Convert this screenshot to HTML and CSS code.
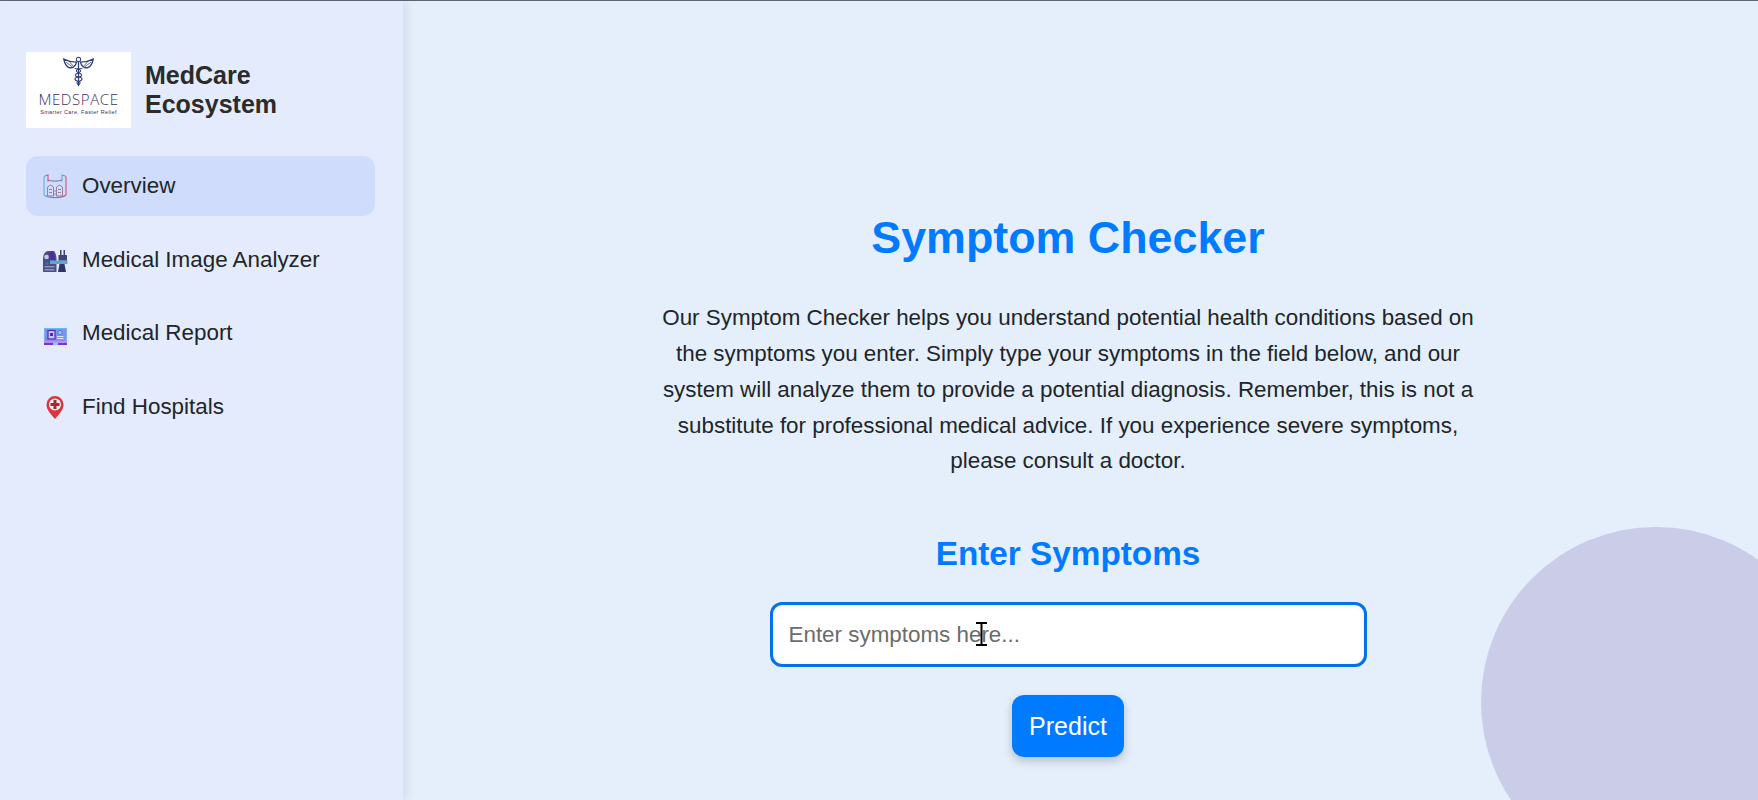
FILE: index.html
```html
<!DOCTYPE html>
<html lang="en">
  <head>
    <meta charset="utf-8">
    <meta name="viewport" content="width=device-width, initial-scale=1">
    <title>Symptom Checker - MedCare Ecosystem</title>
    <link rel="stylesheet" href="styles.css">
  </head>
  <body>
    <div class="app">
      <aside class="sidebar">
        <div class="brand">
          <div class="logo">
            <svg class="logo-mark" viewBox="0 0 40 40" aria-hidden="true">
              <g fill="none" stroke="#2c3e73">
                <circle cx="20" cy="4.500" r="2.800" stroke-width="1.300"/>
                <path d="M20 7v32" stroke-width="1.600"/>
                <path d="M1 4c5 2.500 11 4 16.500 4-1 5-5 8-9.500 7C5 14 2 9 1 4z" stroke-width="1.700"/>
                <path d="M39 4c-5 2.500-11 4-16.500 4 1 5 5 8 9.500 7 3-1 6-6 7-11z" stroke-width="1.700"/>
                <path d="M4 8l8 6M8 7l6 7M36 8l-8 6M32 7l-6 7" stroke-width="1"/>
                <path d="M15 16c8 0 10 4 5 5.500s-6 5 0 5.500 6 4 1 5.500-3 3-1 5" stroke-width="1.300"/>
                <path d="M25 16c-8 0-10 4-5 5.500s6 5 0 5.500-6 4-1 5.500 3 3 1 5" stroke-width="1.300"/>
              </g>
            </svg>
            <div class="logo-name">MEDSPACE</div>
            <div class="logo-tag">Smarter Care, Faster Relief</div>
          </div>
          <h2 class="brand-title">MedCare Ecosystem</h2>
        </div>

        <nav class="nav">
          <a class="nav-item active" href="#">
            <svg class="nav-icon" viewBox="0 0 26 26" aria-hidden="true">
              <defs>
                <linearGradient id="rimGrad" x1="0" x2="1" y1="0" y2="0">
                  <stop offset="0" stop-color="#58b4f6"/>
                  <stop offset="0.5" stop-color="#7f7fb5"/>
                  <stop offset="1" stop-color="#d8506f"/>
                </linearGradient>
              </defs>
              <g fill="none" stroke="url(#rimGrad)" stroke-width="1.100">
                <path d="M2 22V4.500c0-1 1.500-2 4-2.500v6.500"/>
                <path d="M24 22V4.500c0-1-1.500-2-4-2.500v6.500"/>
                <path d="M2 22c4 3.500 18 3.500 22 0"/>
              </g>
              <path d="M6 7c4 1.500 10 1.500 14 0" fill="none" stroke="#7a6f9c"/>
              <g fill="none" stroke="#9a7f9f" stroke-width="1">
                <path d="M5.500 23v-9l3-2 3 2v9z"/>
                <path d="M14.500 23v-9l3-2 3 2v9z"/>
                <path d="M7 16.500h3M7 19.500h3M16 16.500h3M16 19.500h3M11.500 18h3M11.500 21h3"/>
              </g>
            </svg>
            <span>Overview</span>
          </a>
          <a class="nav-item" href="#">
            <svg class="nav-icon" viewBox="0 0 26 26" aria-hidden="true">
              <path d="M1 12c0-5 2-8 6-8h5c1.500 2 2.500 5 2.500 8v13H2c-.7 0-1-.5-1-1z" fill="#4b4f80"/>
              <path d="M7 6c1-1.500 3-2 4-1 1.500 2 2 5 2 8H8z" fill="#4b2f9f"/>
              <circle cx="4.500" cy="10" r="2.300" fill="#b9cfe8"/>
              <path d="M3.500 15.500h3v2h-3z" fill="#2a7fc0"/>
              <path d="M8 13.500h17.500v3.500H8z" fill="#5aa7d8"/>
              <path d="M2.500 19h10v1.500h-10zM2.500 22h10v1.500h-10z" fill="#8f93c4"/>
              <path d="M18 3h1.500v5H18zM21.500 3H23v5h-1.500zM16.500 8H25v5.500h-8.500z" fill="#3f4475"/>
              <path d="M17.500 17h5l1.500 8h-8z" fill="#2e3468"/>
            </svg>
            <span>Medical Image Analyzer</span>
          </a>
          <a class="nav-item" href="#">
            <svg class="nav-icon" viewBox="0 0 26 26" aria-hidden="true">
              <rect x="2.500" y="8.500" width="22" height="13" fill="#8f8af0" stroke="#6fb6f2"/>
              <rect x="6" y="10.500" width="7" height="8.500" fill="#c4c5f8" stroke="#4b2fb0" stroke-width="1.200"/>
              <path d="M8 13h3v3H8z" fill="#4b2fb0"/>
              <circle cx="18" cy="12.500" r="2.200" fill="#7fd0f2" stroke="#4a7fd8"/>
              <path d="M15 16.500h6.500M15 18.500h6.500" stroke="#dfe2fa"/>
              <path d="M2 22.500h23V25H2z" fill="#7a2fe0"/>
              <path d="M11 22.500h5V25h-5z" fill="#8fc0f4"/>
            </svg>
            <span>Medical Report</span>
          </a>
          <a class="nav-item" href="#">
            <svg class="nav-icon" viewBox="0 0 26 26" aria-hidden="true">
              <path d="M13 25C9 20 4.500 16 4.500 10.500a8.500 8.500 0 0 1 17 0C21.500 16 17 20 13 25z" fill="#d9363e"/>
              <circle cx="13" cy="10.500" r="6" fill="#f3eeee"/>
              <path d="M11.500 6h3v3h3v3h-3v3h-3v-3h-3V9h3z" fill="#9c2b38"/>
            </svg>
            <span>Find Hospitals</span>
          </a>
        </nav>
      </aside>

      <main class="main">
        <div class="blob"></div>
        <section class="checker">
          <h1>Symptom Checker</h1>
          <p class="intro">Our Symptom Checker helps you understand potential health conditions based on the symptoms you enter. Simply type your symptoms in the field below, and our system will analyze them to provide a potential diagnosis. Remember, this is not a substitute for professional medical advice. If you experience severe symptoms, please consult a doctor.</p>
          <h2 class="form-title">Enter Symptoms</h2>
          <div class="input-wrap">
            <input class="symptom-input" type="text" placeholder="Enter symptoms here...">
            <svg class="ibeam" viewBox="0 0 13 24" aria-hidden="true">
              <path d="M1 1h11M1 23h11M6.500 1v22" fill="none" stroke="#000" stroke-width="2"/>
            </svg>
          </div>
          <button class="predict" type="button">Predict</button>
        </section>
      </main>
    </div>
  </body>
</html>
```

FILE: styles.css
```css
* {
  box-sizing: border-box;
}

html, body {
  height: 100%;
}

body {
  margin: 0;
  font-family: "Liberation Sans", Arial, sans-serif;
  color: #212529;
  overflow: hidden;
}

.app {
  display: flex;
  height: 800px;
  border-top: 1px solid #5f6672;
}

.sidebar {
  width: 403px;
  flex-shrink: 0;
  padding: 51px 28px 0 26px;
  background: #e4ebfd;
  box-shadow: 4px 0 10px rgba(0, 0, 0, 0.07);
  position: relative;
  z-index: 1;
}

.brand {
  display: flex;
  align-items: center;
  gap: 14px;
  margin-bottom: 28px;
}

.logo {
  width: 105px;
  height: 76px;
  flex-shrink: 0;
  background: #fff;
  display: flex;
  flex-direction: column;
  align-items: center;
  padding-top: 4px;
}

.logo-mark {
  width: 31px;
  height: 31px;
}

.logo-name {
  font-family: "Open Sans", sans-serif;
  font-size: 15px;
  font-weight: 300;
  line-height: 16px;
  margin-top: 4px;
  letter-spacing: 0.6px;
  color: #3d2f63;
}

.logo-tag {
  font-size: 5.500px;
  line-height: 7px;
  margin-top: 2px;
  letter-spacing: 0.35px;
  white-space: nowrap;
  color: #3a3560;
}

.brand-title {
  margin: -1px 0 0;
  font-size: 25px;
  line-height: 29px;
  font-weight: bold;
  color: #2b2b2b;
}

.nav {
  display: flex;
  flex-direction: column;
  gap: 13.500px;
}

.nav-item {
  display: flex;
  align-items: center;
  gap: 14px;
  height: 60px;
  padding: 0 16px;
  border-radius: 12px;
  font-size: 22.400px;
  color: #212529;
  text-decoration: none;
}

.nav-item.active {
  background: #cfdcfc;
}

.nav-icon {
  width: 26px;
  height: 26px;
  flex-shrink: 0;
}

.main {
  flex: 1;
  position: relative;
  overflow: hidden;
  background: #e4effb;
}

.blob {
  position: absolute;
  width: 350px;
  height: 350px;
  right: -73px;
  bottom: -77px;
  border-radius: 50%;
  background: #cbcde8;
}

.checker {
  position: relative;
  width: 830px;
  margin-left: 250px;
  padding-top: 208px;
  text-align: center;
}

.checker h1 {
  margin: 0 0 35px;
  font-size: 44.800px;
  line-height: 56px;
  font-weight: bold;
  color: #007bff;
}

.intro {
  margin: 0 0 56px;
  font-size: 22.400px;
  line-height: 35.840px;
}

.form-title {
  margin: 0 0 29px;
  font-size: 33.300px;
  line-height: 38px;
  font-weight: bold;
  color: #007bff;
}

.input-wrap {
  position: relative;
  width: 597px;
  margin: 0 auto 28px;
}

.symptom-input {
  display: block;
  width: 100%;
  height: 65px;
  padding: 0 16px;
  border: 3px solid #0073ea;
  border-radius: 12px;
  background: #fff;
  font: 22.400px "Liberation Sans", Arial, sans-serif;
  box-shadow: inset 0 1px 4px rgba(0, 0, 0, 0.08);
  outline: none;
}

.symptom-input::placeholder {
  color: #6c6c6c;
  opacity: 1;
}

.ibeam {
  position: absolute;
  left: 205px;
  top: 20px;
  width: 13px;
  height: 24px;
}

.predict {
  display: block;
  width: 112px;
  height: 62px;
  margin: 0 auto;
  border: 0;
  border-radius: 12px;
  background: #007bff;
  color: #fff;
  font: 25px "Liberation Sans", Arial, sans-serif;
  box-shadow: 0 4px 10px rgba(0, 0, 0, 0.2);
}
```
